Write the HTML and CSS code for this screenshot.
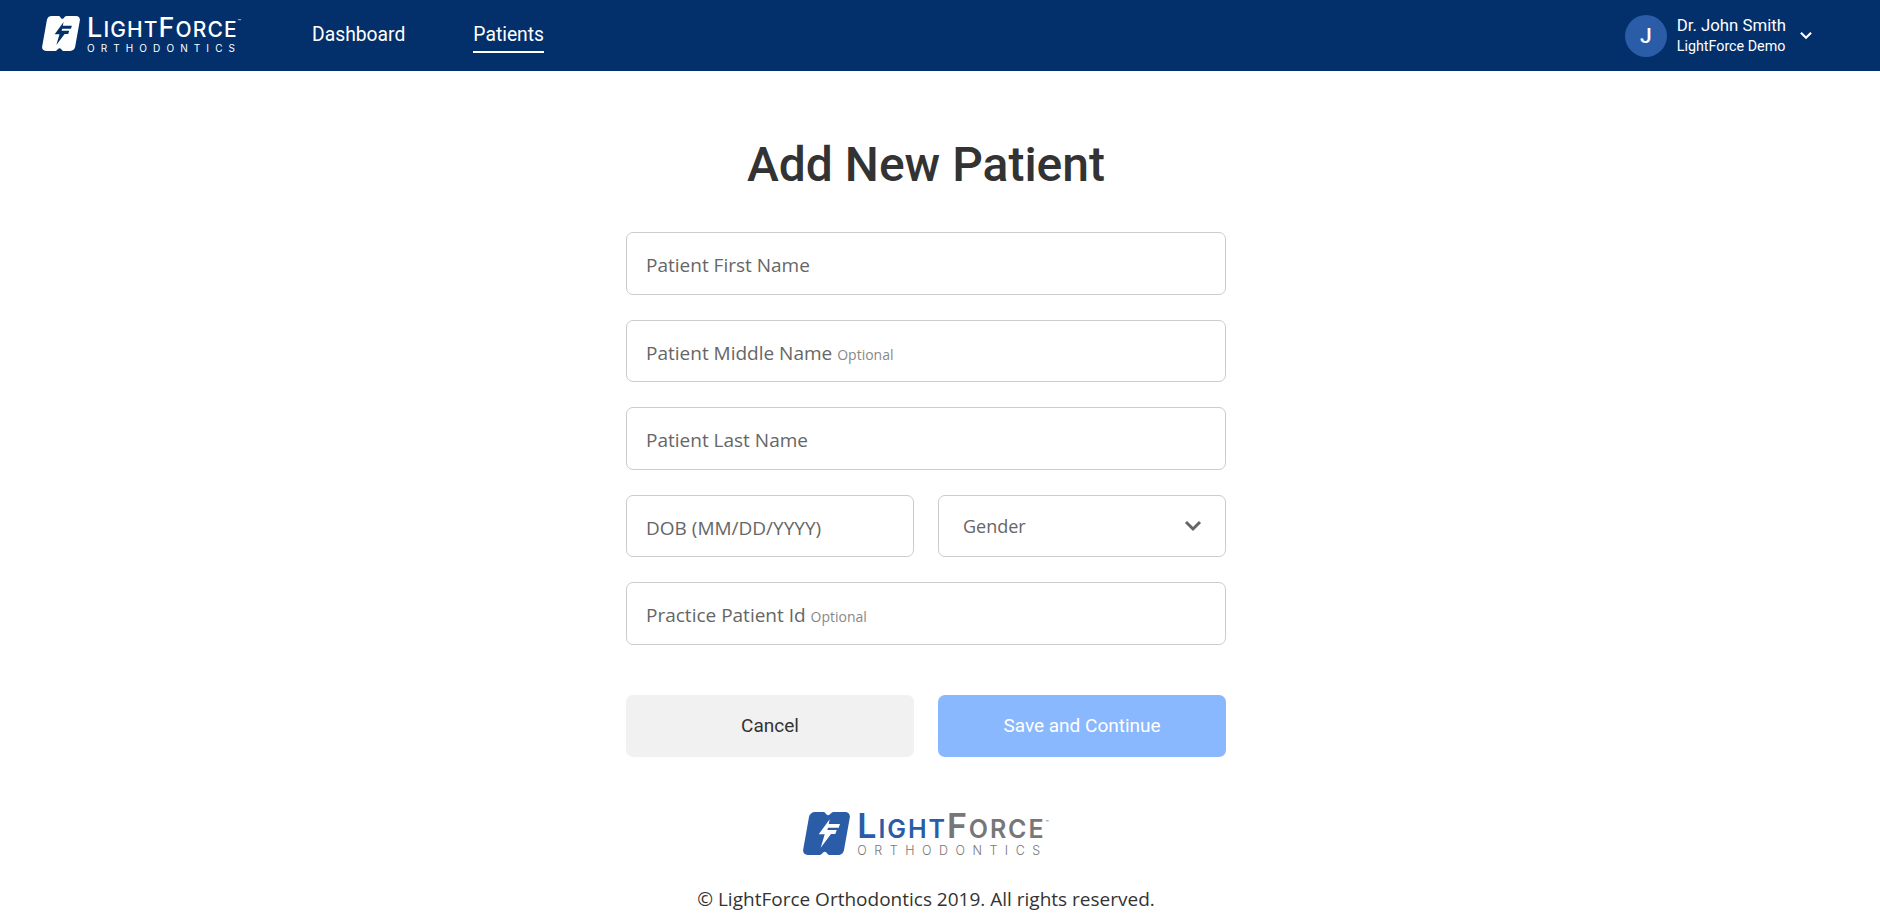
FILE: index.html
```html
<!DOCTYPE html>
<html lang="en">
<head>
    <meta charset="UTF-8">
    <meta name="viewport" content="width=device-width, initial-scale=1.0">
    <title>Add New Patient</title>
    <link rel="stylesheet" href="styles.css">
</head>
<body>
    <svg class="sprite" width="0" height="0">
        <symbol id="lf-mark" viewBox="0 0 47 43">
            <path class="mark-body" d="M12 0H20.500C22 0 22.400 1 23.500 2.500C24.500 3.600 25.500 3.600 26.800 2.500C28.200 1 29 0 30.500 0H42C45.500 0 47.400 2.400 46.800 5.500L41 38C40.500 41 38 43 35 43H26.500C25 43 24.500 42 23.400 40.500C22.400 39.400 21.400 39.400 20.100 40.500C18.800 42 18 43 16.500 43H5C1.500 43 -0.400 40.600 0.200 37.500L6 5C6.500 2 9 0 12 0Z"/>
            <path class="mark-bolt" d="M26.700 7.300L15.700 22.300H21.700L17.700 35.700L28 22H32.300L33.700 18H24.300L25 15.700H35.700L37 12H25.700Z"/>
        </symbol>
    </svg>

    <header class="topbar">
        <a href="#" class="brand">
            <svg class="brand-mark"><use href="#lf-mark"/></svg>
            <span class="wordmark">
                <span class="wm-top"><span class="wm-cap">L</span>IGHT<span class="wm-cap">F</span>ORCE<sup class="wm-tm">™</sup></span>
                <span class="wm-sub">ORTHODONTICS</span>
            </span>
        </a>
        <nav class="main-nav">
            <a href="#" class="nav-link">Dashboard</a>
            <a href="#" class="nav-link active">Patients</a>
        </nav>
        <div class="user-menu">
            <div class="avatar">J</div>
            <div class="user-info">
                <div class="user-name">Dr. John Smith</div>
                <div class="user-org">LightForce Demo</div>
            </div>
            <svg class="user-chevron" viewBox="0 0 12 8"><path d="M1.500 1.500L6 6L10.500 1.500"/></svg>
        </div>
    </header>

    <div class="page-wrap">
        <main class="page">
            <h1>Add New Patient</h1>
            <form class="patient-form">
                <div class="field"><span class="field-text">Patient First Name</span></div>
                <div class="field"><span class="field-text">Patient Middle Name <small>Optional</small></span></div>
                <div class="field"><span class="field-text">Patient Last Name</span></div>
                <div class="form-row">
                    <div class="field"><span class="field-text">DOB (MM/DD/YYYY)</span></div>
                    <div class="field select-field">
                        <span class="field-text">Gender</span>
                        <svg class="select-chevron" viewBox="0 0 18 12"><path d="M2 2L9 9L16 2"/></svg>
                    </div>
                </div>
                <div class="field"><span class="field-text">Practice Patient Id <small>Optional</small></span></div>
                <div class="form-row actions">
                    <button type="button" class="btn btn-cancel">Cancel</button>
                    <button type="button" class="btn btn-save">Save and Continue</button>
                </div>
            </form>
            <footer class="page-footer">
                <div class="brand brand-footer">
                    <svg class="brand-mark"><use href="#lf-mark"/></svg>
                    <span class="wordmark">
                        <span class="wm-top"><span class="wm-blue"><span class="wm-cap">L</span>IGHT</span><span class="wm-cap">F</span>ORCE<sup class="wm-tm">™</sup></span>
                        <span class="wm-sub">ORTHODONTICS</span>
                    </span>
                </div>
                <p class="copyright">© LightForce Orthodontics 2019. All rights reserved.</p>
            </footer>
        </main>
    </div>
</body>
</html>
```

FILE: styles.css
```css
* {
    box-sizing: border-box;
}
body {
    margin: 0;
    background: #fff;
    font-family: Roboto, Arial, sans-serif;
    color: #333;
}
.sprite {
    position: absolute;
}

/* top bar */
.topbar {
    height: 71px;
    background: #032f6b;
    display: flex;
    align-items: center;
    padding: 0 0 0 42px;
}
.brand {
    display: flex;
    text-decoration: none;
    color: #fff;
    --mark-body: #fff;
    --mark-bolt: #032f6b;
}
.brand-mark {
    width: 38px;
    height: 35px;
    margin-top: -1px;
    flex-shrink: 0;
}
.mark-body {
    fill: var(--mark-body);
}
.mark-bolt {
    fill: var(--mark-bolt);
}
.wordmark {
    display: flex;
    flex-direction: column;
    margin-left: 7px;
    font-family: Inter, Arial, sans-serif;
}
.wm-top {
    font-size: 21px;
    line-height: 22px;
    letter-spacing: 1.100px;
    font-weight: 500;
    white-space: nowrap;
}
.wm-cap {
    font-size: 27px;
}
.wm-tm {
    font-size: 5px;
    letter-spacing: 0;
    vertical-align: 14px;
    line-height: 0;
}
.wm-sub {
    font-size: 10px;
    line-height: 11px;
    letter-spacing: 6.100px;
    margin-top: 2px;
    white-space: nowrap;
}
.main-nav {
    display: flex;
    gap: 68px;
    margin-left: 71px;
    height: 100%;
    align-items: center;
}
.nav-link {
    color: #fff;
    text-decoration: none;
    font-size: 19.300px;
    line-height: 24px;
    padding: 3px 0 4px;
    border-bottom: 2px solid transparent;
    margin-top: 2px;
}
.nav-link.active {
    border-bottom-color: #fff;
}
.user-menu {
    display: flex;
    align-items: center;
    margin-left: auto;
    margin-right: 67px;
    color: #fff;
}
.avatar {
    width: 42px;
    height: 42px;
    border-radius: 50%;
    background: #2a5ca8;
    display: flex;
    align-items: center;
    justify-content: center;
    font-size: 21px;
    font-weight: 500;
}
.user-info {
    margin-left: 10px;
}
.user-name {
    font-size: 16.800px;
    line-height: 21px;
}
.user-org {
    font-size: 14.300px;
    line-height: 20px;
}
.user-chevron {
    width: 14px;
    height: 9px;
    margin-left: 13px;
    fill: none;
    stroke: #fff;
    stroke-width: 2;
}

/* form */
.page-wrap {
    padding-right: 28px;
}
.page {
    width: 600px;
    margin: 0 auto;
}
h1 {
    margin: 0;
    padding-top: 72px;
    font-size: 48px;
    line-height: 44px;
    font-weight: 500;
    text-align: center;
    color: #333;
}
.patient-form {
    margin-top: 45px;
    display: flex;
    flex-direction: column;
    gap: 25px;
}
.form-row {
    display: grid;
    grid-template-columns: 1fr 1fr;
    gap: 24px;
}
.field {
    height: 62.500px;
    border: 1px solid #ccc;
    border-radius: 7px;
    padding: 4px 19px 0;
    display: flex;
    align-items: center;
    justify-content: space-between;
    font-family: "Open Sans", Arial, sans-serif;
    font-size: 19px;
    color: #666;
}
.field small {
    font-size: 14px;
    color: #888;
}
.select-field {
    padding: 0 23px 0 24px;
    font-size: 18px;
}
.select-chevron {
    width: 18px;
    height: 12px;
    fill: none;
    stroke: #666;
    stroke-width: 3;
}
.actions {
    margin-top: 25px;
}
.btn {
    height: 62px;
    border: none;
    border-radius: 7px;
    font-family: Roboto, Arial, sans-serif;
    font-size: 19px;
}
.btn-cancel {
    background: #f1f1f1;
    color: #333;
}
.btn-save {
    background: #8ab8ff;
    color: #fff;
}

/* footer */
.page-footer {
    margin-top: 55px;
    display: flex;
    flex-direction: column;
    align-items: center;
}
.brand-footer {
    color: #777;
    --mark-body: #2a5ca8;
    --mark-bolt: #fff;
}
.brand-footer .brand-mark {
    width: 47px;
    height: 43px;
    margin-top: 0;
}
.brand-footer .wm-top {
    font-size: 25px;
    line-height: 27px;
    letter-spacing: 1.900px;
    font-weight: 600;
}
.brand-footer .wm-cap {
    font-size: 34px;
}
.brand-footer .wm-sub {
    font-size: 12.500px;
    line-height: 14px;
    letter-spacing: 7.500px;
    margin-top: 1px;
    font-weight: 300;
}
.wm-blue {
    color: #2a5ca8;
}
.copyright {
    margin: 29px 0 0;
    font-family: "Open Sans", Arial, sans-serif;
    font-size: 19px;
    line-height: 24px;
    color: #333;
}
```
